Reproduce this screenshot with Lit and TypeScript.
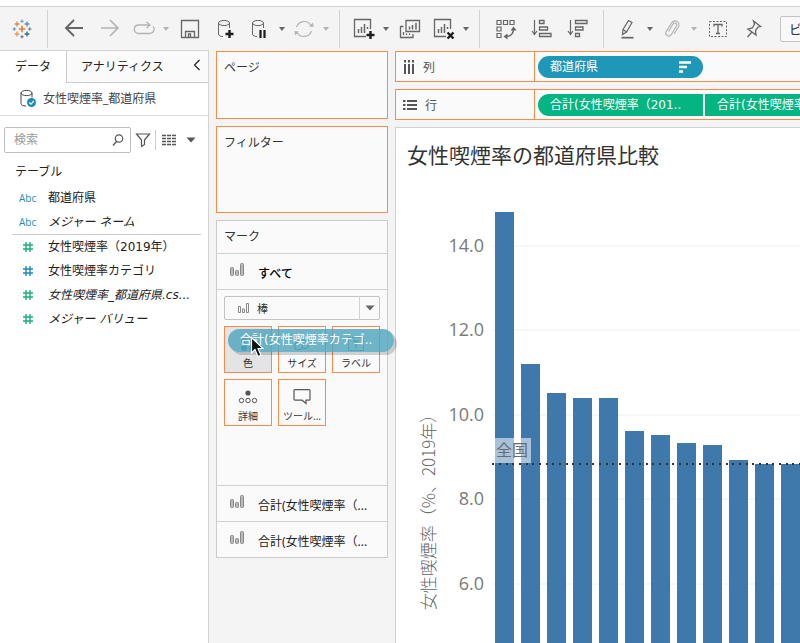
import { LitElement, html, svg, css, nothing, TemplateResult } from "lit";
import { customElement } from "lit/decorators.js";
import { classMap } from "lit/directives/class-map.js";

const icon = (w: number, h: number, body: unknown) =>
  html`<svg width=${w} height=${h} viewBox="0 0 ${w} ${h}" fill="none" stroke="currentColor" aria-hidden="true">${body}</svg>`;

const plus = (x: number, y: number, r: number, color: string, w: number) =>
  svg`<path d="M${x - r} ${y}h${2 * r}M${x} ${y - r}v${2 * r}" stroke=${color} stroke-width=${w} />`;

const cylinder = svg`<ellipse cx="8" cy="5" rx="5.5" ry="2.6" /><path d="M2.500 5v11c0 1.600 2 2.500 4.500 2.500M13.500 5v5" />`;
const sheet = svg`<path d="M18.500 12V2.500H2.500v17H14" stroke-width="1.300" /><path d="M6.500 12v4M9.500 10v6M12.500 7v9M15.500 10v2" stroke-width="1.500" />`;

const icons = {
  logo: icon(20, 20, svg`
    ${plus(10, 10, 3.2, "#eb7a3c", 1.6)}
    ${plus(5, 5, 2.4, "#e8853f", 1.3)}${plus(15, 5, 2.4, "#5c8cae", 1.3)}
    ${plus(5, 15, 2.4, "#eb9550", 1.3)}${plus(15, 15, 2.4, "#2f6a92", 1.3)}
    ${plus(10, 2.3, 1.8, "#6fa3b8", 1.1)}${plus(10, 17.700, 1.8, "#4b7fa3", 1.1)}
    ${plus(2.3, 10, 1.8, "#6b8fae", 1.1)}${plus(17.700, 10, 1.8, "#5485a5", 1.1)}`),
  back: icon(20, 20, svg`<path d="M19 9H2M10 1 2 9l8 8" stroke-width="1.900" />`),
  forward: icon(20, 20, svg`<path d="M1 9h17M10 1l8 8-8 8" stroke-width="1.700" />`),
  redo: icon(24, 14, svg`<path d="M17 3H6a4.300 4.300 0 0 0 0 8.500h12a4.200 4.200 0 0 0 3-7M14.500 0 18 3l-3.500 3" stroke-width="1.300" />`),
  save: icon(20, 20, svg`<path d="M1.500 1.500h17v17h-17z" stroke-width="1.300" /><path d="M5.500 18v-5.500h9V18M8.500 18v-3h2v3" stroke-width="1.300" />`),
  dbAdd: icon(20, 22, svg`${cylinder}<path d="M9.500 16h8M13.500 12v8" stroke="#1c1c1c" stroke-width="2.400" />`),
  dbPause: icon(20, 22, svg`${cylinder}<path d="M10.500 12v8M14.500 12v8" stroke="#1c1c1c" stroke-width="2.200" />`),
  refresh: icon(20, 20, svg`<path d="M2.500 8A8 8 0 0 1 17 6.500M17.500 12A8 8 0 0 1 3 13.500" stroke-width="1.200" /><path d="M15 7.500l4.500.5-.5-4.500zM5 12.500l-4.500-.5.5 4.500z" fill="currentColor" stroke="none" />`),
  sheetAdd: icon(24, 24, svg`${sheet}<path d="M14.500 18h8M18.500 14v8" stroke="#1c1c1c" stroke-width="2.400" />`),
  duplicate: icon(22, 20, svg`<path d="M7 1.500h13.500v11H7z" stroke-width="1.300" /><path d="M10.500 7.500v3M13.500 6v4.500M17 4v6.500" stroke-width="1.500" /><path d="M4.500 7.500h-3v11H14v-3.500M4.500 13v3M7.500 14.500V16M10.500 14.500V16" stroke-width="1.300" />`),
  sheetClear: icon(24, 24, svg`${sheet}<path d="M15.500 15.500l6 6M21.500 15.500l-6 6" stroke="#1c1c1c" stroke-width="2.400" />`),
  swap: icon(22, 22, svg`<path d="M2 2.500h4v4H2zM8.500 2.500h4v4h-4zM15 2.500h4v4h-4zM2 9h4v4H2zM2 15.500h4v4H2z" stroke-width="1.200" /><path d="M18.500 11c0 5-3.500 7.500-8 7.500" stroke-width="1.500" /><path d="M15.500 12.500l3-4 3 4zM12.500 15.500l-4 3 4 3z" fill="currentColor" stroke="none" />`),
  sortAsc: icon(22, 20, svg`<path d="M3.500 1v14M1 12l2.500 3.500L6 12" stroke-width="1.200" /><path d="M8.500 1.500h4.500v3H8.500zM8.500 8h8v3h-8zM8.500 14.500h11.500v3H8.500z" stroke-width="1.300" />`),
  sortDesc: icon(22, 20, svg`<path d="M3.500 1v14M1 12l2.500 3.500L6 12" stroke-width="1.200" /><path d="M8.500 1.500H20v3H8.500zM8.500 8h7.500v3H8.500zM8.500 14.500h4v3h-4z" stroke-width="1.300" />`),
  pen: icon(16, 20, svg`<path d="M2.500 15.500l.5-5 5.500-9 3.500 2-5.500 9.500zM3 10.500l3.500 2.500" stroke-width="1.200" /><path d="M1.500 18.700h12" stroke-width="1.700" />`),
  clip: icon(16, 20, svg`<path d="M4.500 12.500l4.500-7.500a2 2 0 0 1 3.500 2L7 16a3 3 0 0 1-5-3.200L7.500 4a4 4 0 0 1 7 4L10 15" stroke-width="1.200" />`),
  text: icon(20, 18, svg`<path d="M1.500 1.500h17v15h-17z" stroke-dasharray="2 1.500" /><path d="M6 6.500V4.500h8v2M10 4.500v9M8 13.500h4" stroke-width="1.300" />`),
  pin: icon(18, 20, svg`<path d="M8.500 2l7 5.500-2.500.5-2.500 3.500.5 4.500L3 10l4.500-1L9.500 5zM6.500 13.500 2.500 18" stroke-width="1.300" />`),
  source: icon(20, 20, svg`<ellipse cx="7.500" cy="4" rx="5.500" ry="2.600" /><path d="M2 4v10.500C2 16 4 17 7 17M13 4v4.500" /><circle cx="12.500" cy="13.500" r="4.500" fill="#1d8cb4" stroke="none" /><path d="M10.300 13.500l1.700 1.700 2.800-3.200" stroke="#fff" stroke-width="1.200" />`),
  search: icon(12, 14, svg`<circle cx="7" cy="5.500" r="3.700" stroke-width="1.200" /><path d="M4.500 8.500 1 12.500" stroke-width="1.300" />`),
  filter: icon(16, 16, svg`<path d="M1.500 2h13L9.500 8v4.500l-3 2V8z" stroke-width="1.200" />`),
  list: icon(14, 12, svg`<path d="M0 1.500h14M0 4.500h14M0 7.500h14M0 10.500h14" stroke-width="1.500" stroke-dasharray="4 1" />`),
  columns: icon(12, 14, svg`<path d="M2 0v2.500M6 0v2.500M10 0v2.500M2 4v10M6 4v10M10 4v10" stroke-width="2" />`),
  rows: icon(14, 12, svg`<path d="M0 2h2.500M0 6h2.500M0 10h2.500M4 2h10M4 6h10M4 10h10" stroke-width="2" />`),
  bars: icon(14, 14, svg`<rect x="0.500" y="4.500" width="3" height="8" rx="1" fill="#bbb" /><rect x="5.500" y="7.500" width="3" height="5" rx="1" fill="#bbb" /><rect x="10.500" y="0.500" width="3" height="12" rx="1" fill="#bbb" />`),
  barsSmall: icon(11, 11, svg`<path d="M.5 3.500h2v6h-2zM4.500 6h2v3.500h-2zM8.500.500h2v9h-2z" />`),
  color: icon(20, 16, svg`<g stroke="none"><circle cx="6" cy="4" r="3" fill="#cf6a62" /><circle cx="14" cy="4" r="3" fill="#d98d54" /><circle cx="6" cy="12" r="3" fill="#3a76a8" /><circle cx="14" cy="12" r="3" fill="#4d86b0" /></g>`),
  size: icon(20, 16, svg`<ellipse cx="6.500" cy="10" rx="4" ry="4" /><path d="M8 5.500a5 5 0 0 1 8.500 4.500c-1 2.500-4 3-5.500 2" />`),
  label: icon(20, 16, svg`<path d="M2.500 1.500h15v13h-15z" stroke-dasharray="2 1" /><path d="M7 5h6M10 5v7" />`),
  detail: icon(20, 16, svg`<circle cx="10" cy="4" r="2.600" fill="currentColor" stroke="none" /><circle cx="3.500" cy="11.500" r="2.200" /><circle cx="10" cy="11.500" r="2.200" /><circle cx="16.500" cy="11.500" r="2.200" />`),
  tooltip: icon(20, 16, svg`<path d="M3 .700h14a1 1 0 0 1 1 1v8.500a1 1 0 0 1-1 1h-3V14.500l-4-3.300H3a1 1 0 0 1-1-1V1.700a1 1 0 0 1 1-1z" stroke-width="1.200" />`),
  collapse: icon(8, 12, svg`<path d="M6.500 1 1.500 6l5 5" stroke-width="1.200" />`),
  caret: icon(8, 6, svg`<path d="M1 1h6L4 5z" fill="currentColor" stroke="none" />`),
  caretBig: icon(10, 6, svg`<path d="M.5.500h9L5 5.500z" fill="currentColor" stroke="none" />`),
  sortPill: icon(12, 12, svg`<path d="M0 1.500h12M0 6h8M0 10.500h4" stroke-width="2.400" />`),
};

type Tool = { id?: keyof typeof icons; name?: string; menu?: boolean; off?: boolean; sep?: boolean };

const TOOLS: Tool[] = [
  { id: "logo", name: "スタートページ" },
  { sep: true },
  { id: "back", name: "元に戻す" },
  { id: "forward", name: "やり直す", off: true },
  { id: "redo", name: "繰り返す", menu: true, off: true },
  { id: "save", name: "保存" },
  { id: "dbAdd", name: "新しいデータソース" },
  { id: "dbPause", name: "自動更新の一時停止", menu: true },
  { id: "refresh", name: "更新", menu: true, off: true },
  { sep: true },
  { id: "sheetAdd", name: "新しいワークシート", menu: true },
  { id: "duplicate", name: "複製" },
  { id: "sheetClear", name: "シートのクリア", menu: true },
  { sep: true },
  { id: "swap", name: "行と列の交換" },
  { id: "sortAsc", name: "昇順で並べ替え" },
  { id: "sortDesc", name: "降順で並べ替え" },
  { sep: true },
  { id: "pen", name: "ハイライト", menu: true },
  { id: "clip", name: "グループ", menu: true, off: true },
  { id: "text", name: "マークラベル" },
  { id: "pin", name: "軸の固定" },
];

@customElement("tool-bar")
export class ToolBar extends LitElement {
  static styles = css`
    :host { display: flex; align-items: center; height: 44px; box-sizing: border-box; padding-left: 4px; background: #f4f4f4; border-top: 1px solid #d2d2d2; overflow: hidden; }
    button { flex: none; display: flex; align-items: center; justify-content: center; width: 36px; height: 32px; padding: 0; border: 0; background: none; color: #666; }
    .split { width: 32px; }
    .menu { width: 12px; }
    .off { color: #b4b4b4; }
    .sep { flex: none; width: 1px; height: 38px; margin: 0 8px 0 7px; background: #d2d2d2; }
    select { flex: none; appearance: none; width: 120px; height: 26px; margin-left: 8px; padding: 0 8px; border: 1px solid #c4c4c4; border-radius: 2px; background: #f8f8f8; color: #333; font: 13px "Noto Sans CJK JP", sans-serif; }
  `;
  render() {
    return html`${TOOLS.map((t) =>
      t.sep
        ? html`<span class="sep"></span>`
        : html`<button class=${classMap({ split: !!t.menu, off: !!t.off })} ?disabled=${t.off} aria-label=${t.name!}>${icons[t.id!]}</button>
            ${t.menu ? html`<button class=${classMap({ menu: true, off: !!t.off })} ?disabled=${t.off} aria-label="メニュー">${icons.caret}</button>` : nothing}`
    )}<select aria-label="表示サイズ"><option>ビュー全体</option></select>`;
  }
}

type Field = { kind: "abc" | "num"; tone: "dim" | "mea"; name: string; generated?: boolean };
const DIMENSIONS: Field[] = [
  { kind: "abc", tone: "dim", name: "都道府県" },
  { kind: "abc", tone: "dim", name: "メジャー ネーム", generated: true },
];
const MEASURES: Field[] = [
  { kind: "num", tone: "mea", name: "女性喫煙率（2019年）" },
  { kind: "num", tone: "dim", name: "女性喫煙率カテゴリ" },
  { kind: "num", tone: "mea", name: "女性喫煙率_都道府県.cs...", generated: true },
  { kind: "num", tone: "mea", name: "メジャー バリュー", generated: true },
];

@customElement("data-pane")
export class DataPane extends LitElement {
  static styles = css`
    :host { display: flex; flex-direction: column; background: #fff; border-right: 1px solid #d2d2d2; color: #222; font: 12px/24px "Noto Sans", "Noto Sans CJK JP", sans-serif; }
    button { padding: 0; border: 0; background: none; color: inherit; font: inherit; }
    .tabs { display: flex; height: 33px; box-sizing: border-box; border-top: 1px solid #d2d2d2; }
    .tab { width: 66px; }
    .rest { flex: 1; display: flex; justify-content: space-between; padding: 0 7px 0 14px; background: #fafafa; border-left: 1px solid #ccc; border-bottom: 1px solid #ccc; }
    .source { display: flex; align-items: center; gap: 4px; height: 32px; padding-left: 19px; color: #444; border-bottom: 1px solid #dcdcdc; }
    .find { display: flex; align-items: center; gap: 4px; padding: 11px 12px 0 4px; color: #555; }
    .find button { display: flex; }
    .box { display: flex; align-items: center; width: 127px; height: 26px; box-sizing: border-box; padding: 0 6px 0 9px; border: 1px solid #bdbdbd; border-radius: 2px; }
    input { flex: 1; min-width: 0; padding: 0; border: 0; outline: 0; background: none; font: inherit; }
    input::placeholder { color: #999; }
    .bar { width: 1px; height: 20px; background: #ccc; }
    .find .opts { gap: 10px; padding-left: 2px; align-items: center; }
    h2 { margin: 7px 0 2px; padding-left: 15px; font: inherit; }
    ul { list-style: none; margin: 0; padding: 0; }
    .measures { margin: 0 7px 0 12px; border-top: 1px solid #ccc; }
    .measures button { padding-left: 7px; }
    li button { display: flex; align-items: center; width: 100%; height: 24px; padding-left: 19px; white-space: nowrap; }
    .glyph { width: 29px; text-align: left; font: 10px "Open Sans", sans-serif; }
    .num { box-sizing: border-box; padding-left: 4px; display: flex; }
    .dim { color: #1d8cb4; }
    .mea { color: #16b07c; }
    .name { font-family: "DejaVu Sans", "Noto Sans CJK JP", sans-serif; line-height: 20px; }
    .generated { font-style: italic; }
  `;
  private field(f: Field) {
    return html`<li><button>
      <span class="glyph ${f.kind} ${f.tone}">${f.kind === "abc" ? "Abc" : icon(10, 10, svg`<path d="M3 0v10M7 0v10M0 3h10M0 7h10" stroke-width="1.400" />`)}</span>
      <span class=${classMap({ name: true, generated: !!f.generated })}>${f.name}</span></button></li>`;
  }
  render() {
    return html`
      <div class="tabs"><button class="tab">データ</button><div class="rest"><button>アナリティクス</button><button aria-label="折りたたむ">${icons.collapse}</button></div></div>
      <div class="source">${icons.source}<span>女性喫煙率_都道府県</span></div>
      <div class="find">
        <label class="box"><input type="text" placeholder="検索" aria-label="検索" />${icons.search}</label>
        <button aria-label="フィルター">${icons.filter}</button><span class="bar"></span>
        <button class="opts" aria-label="表示オプション">${icons.list}${icons.caretBig}</button>
      </div>
      <h2>テーブル</h2>
      <ul>${DIMENSIONS.map((f) => this.field(f))}</ul>
      <ul class="measures">${MEASURES.map((f) => this.field(f))}</ul>`;
  }
}

const TILES: { id: keyof typeof icons; name: string; hot?: boolean }[] = [
  { id: "color", name: "色", hot: true },
  { id: "size", name: "サイズ" },
  { id: "label", name: "ラベル" },
  { id: "detail", name: "詳細" },
  { id: "tooltip", name: "ツール..." },
];

@customElement("card-column")
export class CardColumn extends LitElement {
  static styles = css`
    :host { display: flex; flex-direction: column; gap: 7px; padding: 0 7px; color: #333; font: 12px/24px "Noto Sans", "Noto Sans CJK JP", sans-serif; }
    h2 { margin: 0; font: inherit; }
    button { padding: 0; border: 0; background: none; color: inherit; font: inherit; }
    .card { box-sizing: border-box; padding: 4px 7px; background: #fafafa; border: 1px solid #f68b4b; }
    .pages { height: 68px; }
    .filters { height: 87px; }
    .marks { position: relative; background: #fafafa; border: 1px solid #ccc; }
    .head { padding: 4px 7px; }
    .layer { display: flex; align-items: center; gap: 14px; width: 100%; height: 36px; padding: 5px 13px 0; border-top: 1px solid #d2d2d2; color: #222; white-space: nowrap; }
    .layer svg { color: #888; margin-bottom: 8px; }
    .open { font-weight: 500; color: #000; }
    .editor { height: 196px; box-sizing: border-box; padding: 6px 7px; border-top: 1px solid #d2d2d2; }
    .type { position: relative; display: flex; height: 24px; color: #666; }
    select { appearance: none; flex: 1; padding: 0 0 0 32px; border: 1px solid #c4c4c4; border-radius: 2px; background: #fafafa; color: #333; font: 11px "Noto Sans CJK JP", sans-serif; }
    .lead, .drop { position: absolute; top: 0; bottom: 0; display: flex; align-items: center; pointer-events: none; }
    .lead { left: 14px; color: #888; }
    .drop { right: 0; width: 20px; justify-content: center; border-left: 1px solid #d2d2d2; }
    .tiles { display: grid; grid-template-columns: repeat(3, 48px); gap: 6px; justify-content: space-between; margin-top: 6px; }
    .tile { display: flex; flex-direction: column; align-items: center; justify-content: space-between; height: 47px; box-sizing: border-box; padding: 9px 0 1px; border: 1px solid #f68b4b; color: #555; font-size: 10px; line-height: 16px; }
    .tile span { color: #333; }
    .hot { background: #e4e4e4; }
    .drag { position: absolute; left: 11px; top: 108px; width: 166px; height: 23px; box-sizing: border-box; padding-left: 12px; border-radius: 12px; background: #4fa6bfd0; box-shadow: 3px 3px 0 #0000002b; color: #fff; font: 12px/22px "DejaVu Sans", "Noto Sans CJK JP", sans-serif; white-space: nowrap; z-index: 1; }
    .cursor { position: absolute; left: 33px; top: 115px; z-index: 2; }
  `;
  render() {
    return html`
      <section class="card pages"><h2>ページ</h2></section>
      <section class="card filters"><h2>フィルター</h2></section>
      <section class="marks">
        <h2 class="head">マーク</h2>
        <button class="layer open">${icons.bars}<span>すべて</span></button>
        <div class="editor">
          <div class="type"><select aria-label="マークタイプ"><option>棒</option></select><span class="lead">${icons.barsSmall}</span><span class="drop">${icons.caretBig}</span></div>
          <div class="tiles">${TILES.map((t) => html`<button class=${classMap({ tile: true, hot: !!t.hot })}>${icons[t.id]}<span>${t.name}</span></button>`)}</div>
        </div>
        <button class="layer">${icons.bars}<span>合計(女性喫煙率（...</span></button>
        <button class="layer">${icons.bars}<span>合計(女性喫煙率（...</span></button>
        <div class="drag">合計(女性喫煙率カテゴ..</div>
        <svg class="cursor" width="14" height="22" viewBox="0 0 14 22"><path d="M1.500 1.500v15.500l3.500-3.500 3 7 3-1.300-3-6.700h5z" fill="#111" stroke="#fff" stroke-width="1.200" /></svg>
      </section>`;
  }
}

@customElement("shelf-row")
export class ShelfRow extends LitElement {
  static properties = { name: {}, glyph: { attribute: false } };
  declare name: string;
  declare glyph: TemplateResult;
  static styles = css`
    :host { display: flex; height: 31px; box-sizing: border-box; background: #fafafa; border: 1px solid #f68b4b; border-right: 0; overflow: hidden; color: #333; font: 12px "Noto Sans", "Noto Sans CJK JP", sans-serif; }
    .name { flex: none; display: flex; align-items: center; gap: 8px; width: 139px; box-sizing: border-box; padding-left: 7px; border-right: 1px solid #f68b4b; color: #555; }
    .pills { display: flex; align-items: center; gap: 2px; padding-left: 3px; }
  `;
  render() {
    return html`<span class="name">${this.glyph}<span>${this.name}</span></span><span class="pills"><slot></slot></span>`;
  }
}

const RATES = [14.8, 11.2, 10.5, 10.4, 10.4, 9.62, 9.52, 9.33, 9.27, 8.93, 8.84, 8.82, 8.8, 8.7];
const TICKS = [14, 12, 10, 8, 6];
const NATIONAL = 8.83;
const ZERO = 665;
const UNIT = 42.25;
const yOf = (v: number) => Math.round(ZERO - v * UNIT);

@customElement("rate-chart")
export class RateChart extends LitElement {
  static styles = css`
    :host { display: flex; flex-direction: column; min-height: 0; overflow: hidden; background: #fff; border: 1px solid #d2d2d2; border-width: 1px 0 0 1px; }
    h1 { margin: 0 0 0 11px; padding: 10px 0 2px; color: #333; font: 400 21px/32px "Noto Sans CJK JP", sans-serif; white-space: nowrap; }
    svg { flex: 1; width: 100%; min-height: 0; display: block; }
    .grid { stroke: #eee; }
    .tick { fill: #7a7a7a; font: 400 18px "Open Sans", sans-serif; text-anchor: end; }
    .axis { fill: #666; font: 300 17px "Noto Sans CJK JP", sans-serif; text-anchor: middle; }
    .bar { fill: #3f79ab; }
    .ref { stroke: #333; stroke-width: 2; stroke-dasharray: 2 5 2 5 2 4; }
    .plate { fill: #fff; fill-opacity: 0.55; }
    .note { fill: #6b6b6b; font: 16px "Noto Sans CJK JP", sans-serif; }
  `;
  render() {
    const ref = yOf(NATIONAL);
    return html`<h1>女性喫煙率の都道府県比較</h1>
      <svg role="img" aria-label="女性喫煙率の都道府県比較">
        ${TICKS.map((t) => svg`<line class="grid" x1="96" x2="100%" y1=${yOf(t)} y2=${yOf(t)} /><text class="tick" x="88" y=${yOf(t) + 6}>${t.toFixed(1)}</text>`)}
        <text class="axis" transform="translate(39 336) rotate(-90)">女性喫煙率（%、2019年）</text>
        ${RATES.map((r, i) => svg`<rect class="bar" x=${99 + i * 26} y=${yOf(r)} width="19" height=${ZERO - yOf(r)} />`)}
        <rect class="plate" x="99" y=${ref - 26} width="36" height="25" />
        <text class="note" x="100" y=${ref - 8}>全国</text>
        <line class="ref" x1="96" x2="100%" y1=${ref} y2=${ref} />
      </svg>`;
  }
}

@customElement("app-root")
export class AppRoot extends LitElement {
  static styles = css`
    :host { display: flex; flex-direction: column; height: 100vh; box-sizing: border-box; padding-top: 6px; overflow: hidden; background: #fff; }
    .body { flex: 1; min-height: 0; display: grid; grid-template-columns: 209px 186px minmax(0, 1fr); background: #f4f4f4; }
    tool-bar { flex: none; }
    card-column, .main { padding-top: 1px; }
    .main { display: flex; flex-direction: column; gap: 7px; min-height: 0; }
    .main shelf-row { flex: none; }
    rate-chart { flex: 1; }
    .pill { display: flex; flex: none; align-items: center; justify-content: space-between; width: 165px; height: 22px; padding: 0 12px; border: 0; background: #04b481; color: #fff; font: 12px/20px "DejaVu Sans", "Noto Sans CJK JP", sans-serif; white-space: nowrap; }
    .blue { background: #1f97b8; border-radius: 11px; }
    .first { border-radius: 11px 0 0 11px; }
  `;
  render() {
    return html`<tool-bar></tool-bar>
      <div class="body">
        <data-pane></data-pane>
        <card-column></card-column>
        <div class="main">
          <shelf-row name="列" .glyph=${icons.columns}><button class="pill blue">都道府県${icons.sortPill}</button></shelf-row>
          <shelf-row name="行" .glyph=${icons.rows}><button class="pill first">合計(女性喫煙率（201..</button><button class="pill">合計(女性喫煙率（201..</button></shelf-row>
          <rate-chart></rate-chart>
        </div>
      </div>`;
  }
}
